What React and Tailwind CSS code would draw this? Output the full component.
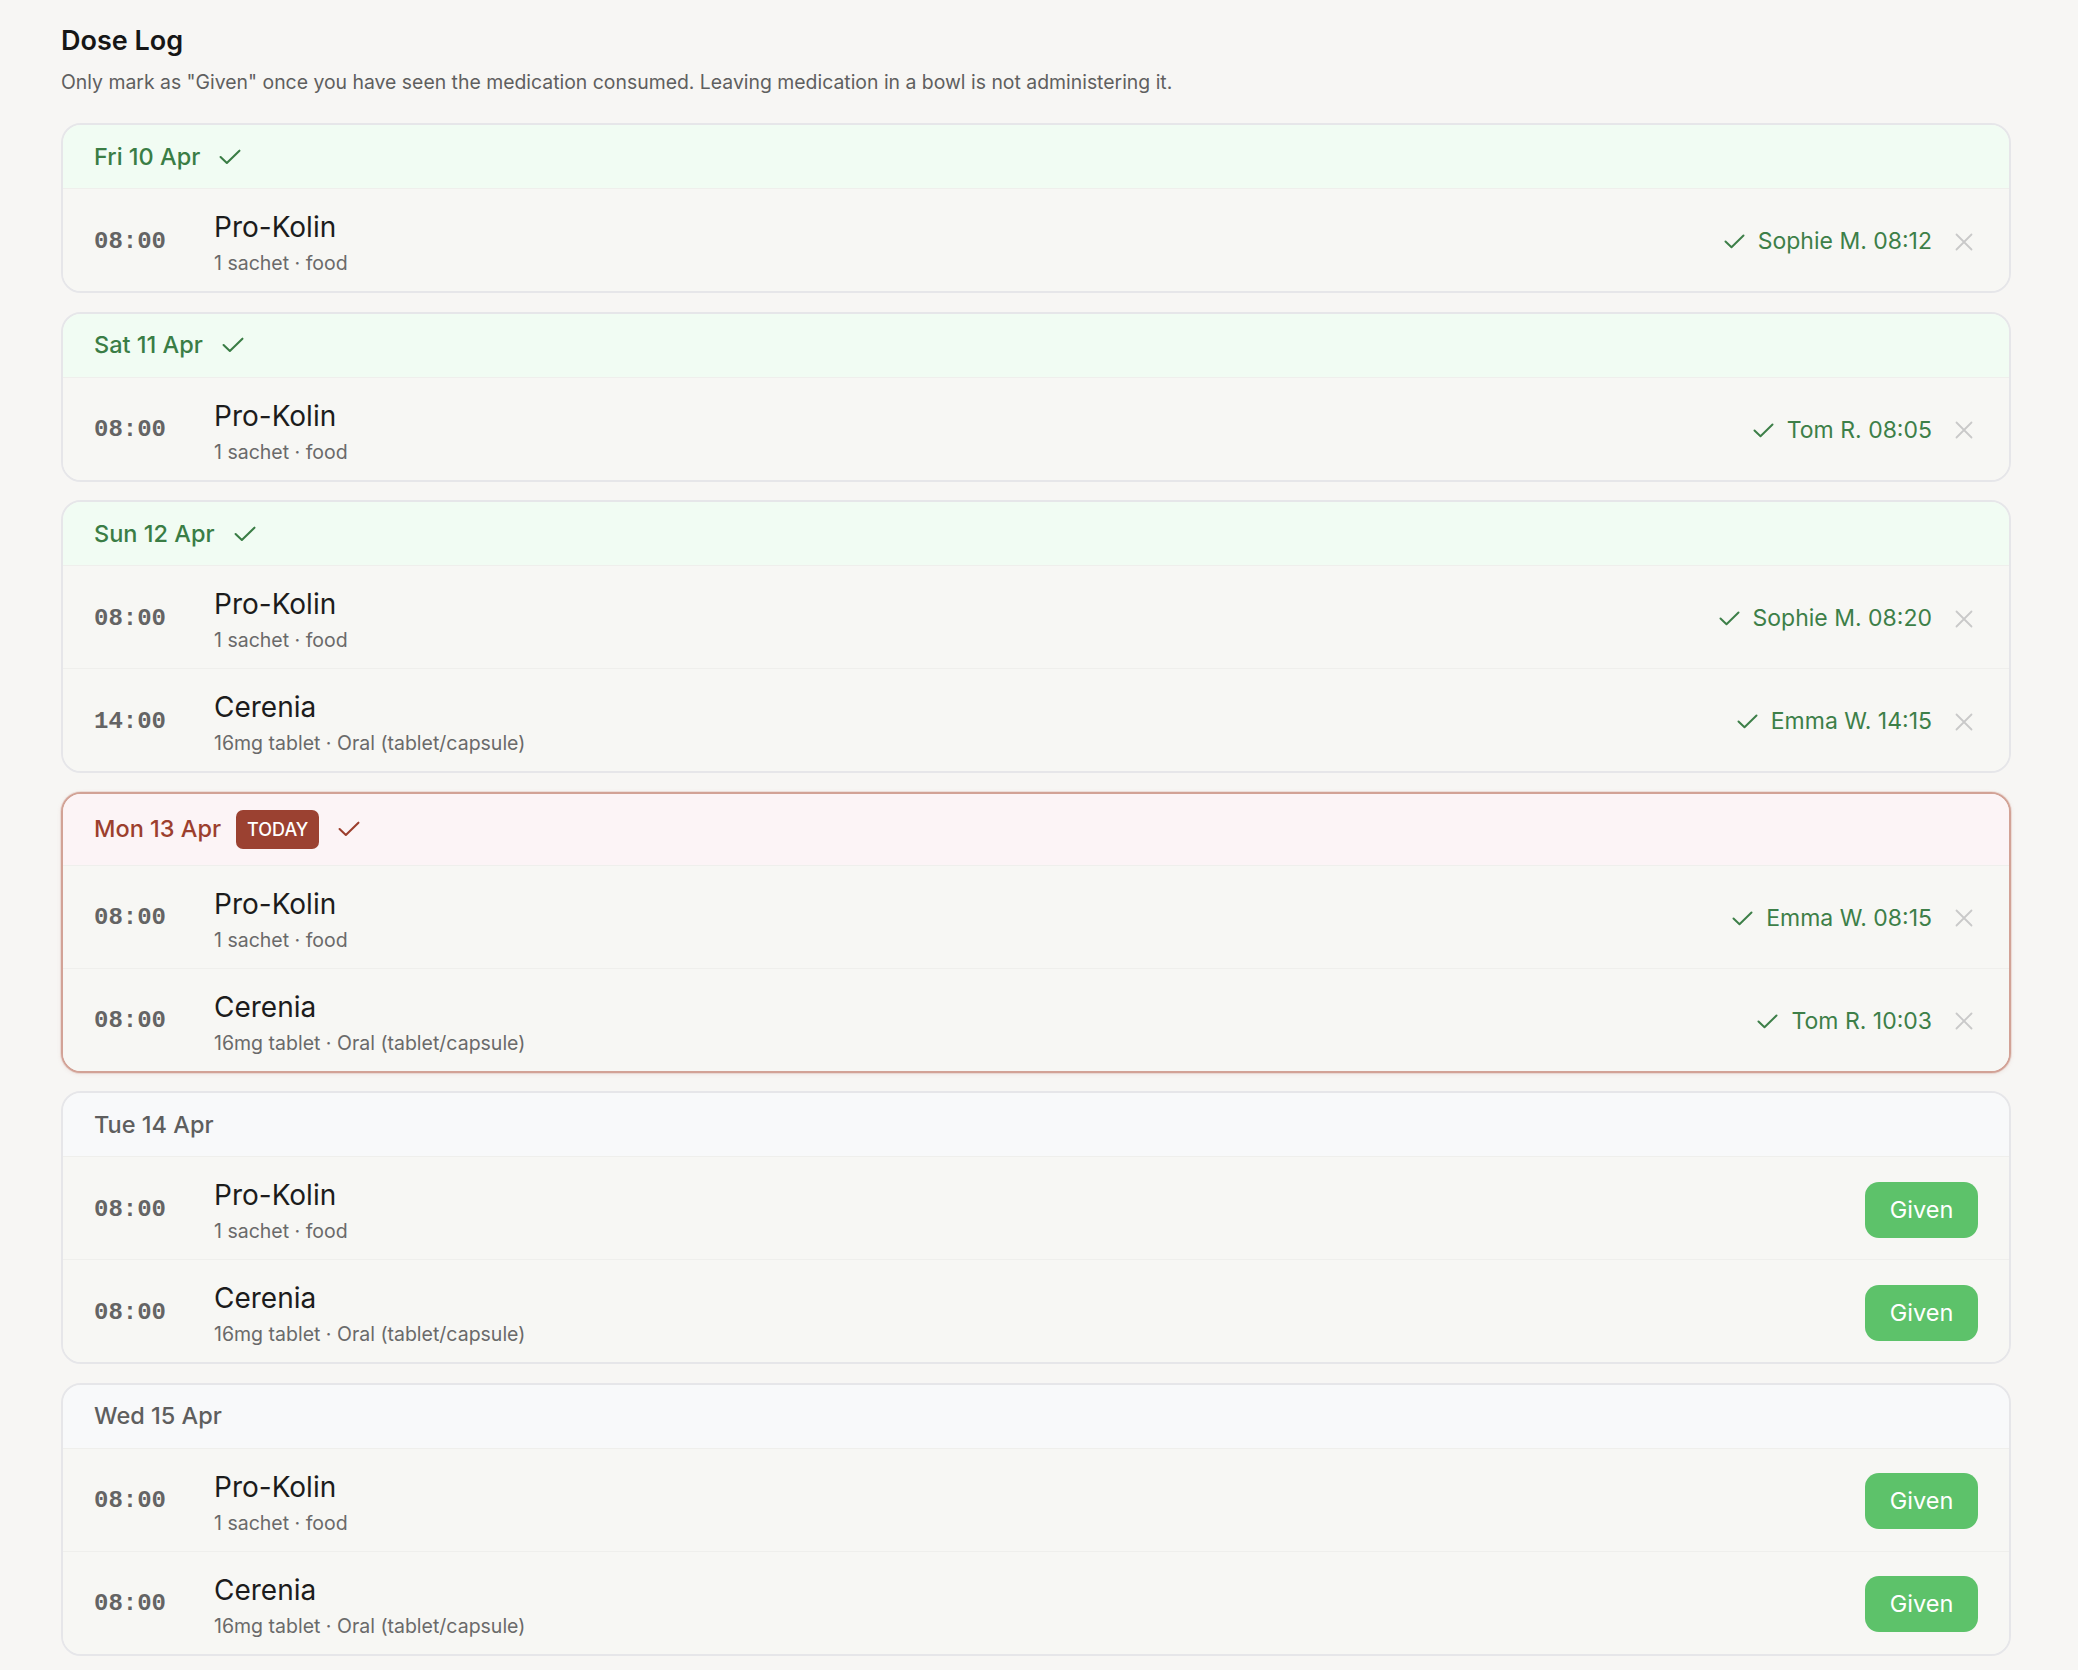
import React from 'react';

const days = [
  {
    label: 'Fri 10 Apr',
    state: 'done',
    doses: [{ time: '08:00', name: 'Pro-Kolin', detail: '1 sachet · food', by: 'Sophie M. 08:12' }],
  },
  {
    label: 'Sat 11 Apr',
    state: 'done',
    doses: [{ time: '08:00', name: 'Pro-Kolin', detail: '1 sachet · food', by: 'Tom R. 08:05' }],
  },
  {
    label: 'Sun 12 Apr',
    state: 'done',
    doses: [
      { time: '08:00', name: 'Pro-Kolin', detail: '1 sachet · food', by: 'Sophie M. 08:20' },
      { time: '14:00', name: 'Cerenia', detail: '16mg tablet · Oral (tablet/capsule)', by: 'Emma W. 14:15' },
    ],
  },
  {
    label: 'Mon 13 Apr',
    state: 'today',
    doses: [
      { time: '08:00', name: 'Pro-Kolin', detail: '1 sachet · food', by: 'Emma W. 08:15' },
      { time: '08:00', name: 'Cerenia', detail: '16mg tablet · Oral (tablet/capsule)', by: 'Tom R. 10:03' },
    ],
  },
  {
    label: 'Tue 14 Apr',
    state: 'upcoming',
    doses: [
      { time: '08:00', name: 'Pro-Kolin', detail: '1 sachet · food' },
      { time: '08:00', name: 'Cerenia', detail: '16mg tablet · Oral (tablet/capsule)' },
    ],
  },
  {
    label: 'Wed 15 Apr',
    state: 'upcoming',
    doses: [
      { time: '08:00', name: 'Pro-Kolin', detail: '1 sachet · food' },
      { time: '08:00', name: 'Cerenia', detail: '16mg tablet · Oral (tablet/capsule)' },
    ],
  },
];

function CheckMark({ className, w = 21, h = 15 }) {
  return (
    <svg width={w} height={h} viewBox="0 0 21 15" fill="none" className={className}>
      <polyline points="1.5,7.5 7.5,13.2 19.5,1.5" stroke="currentColor" strokeWidth="2" strokeLinecap="round" strokeLinejoin="round" />
    </svg>
  );
}

function Cross() {
  return (
    <svg width="18" height="18" viewBox="0 0 18 18" fill="none" className="text-[#c9c9c9]">
      <path d="M1.5 1.5 16.5 16.5M16.5 1.5 1.5 16.5" stroke="currentColor" strokeWidth="1.8" strokeLinecap="round" />
    </svg>
  );
}

function DoseRow({ dose }) {
  return (
    <div className="h-[102px] flex items-center pl-[31px] pr-[31px] bg-[#f7f7f4]">
      <div className="w-[120px] mt-[3px] font-['Liberation_Mono',monospace] font-bold text-[24px] text-[#646464]">
        {dose.time}
      </div>
      <div className="flex flex-col mt-[6px]">
        <div className="text-[28px] leading-[34px] text-[#1c1c1c]">{dose.name}</div>
        <div className="text-[19.5px] leading-[26px] mt-[6px] text-[#6a6a6a]">{dose.detail}</div>
      </div>
      <div className="ml-auto mt-[3px] flex items-center">
        {dose.by ? (
          <>
            <CheckMark className="text-[#3d7f48]" />
            <span className="ml-[13px] text-[23px] text-[#3d7f48]">{dose.by}</span>
            <span className="ml-[23px] mr-[5px] flex items-center">
              <Cross />
            </span>
          </>
        ) : (
          <button className="h-[56px] w-[113px] rounded-[14px] bg-[#5dc26a] text-white text-[23.5px]">
            Given
          </button>
        )}
      </div>
    </div>
  );
}

function DayCard({ day }) {
  const today = day.state === 'today';
  const done = day.state !== 'upcoming';
  const cardBorder = today
    ? 'border-[#d2a296] shadow-[0_0_0_1px_rgba(210,162,150,0.25),0_1px_4px_rgba(180,120,110,0.15)]'
    : 'border-[#e6e6e9]';
  const headBg = today ? 'bg-[#fcf4f6]' : done ? 'bg-[#f1fcf3]' : 'bg-[#f8f9fa]';
  const headText = today ? 'text-[#9c3f2e]' : done ? 'text-[#3a7d45]' : 'text-[#5e5e5e]';

  return (
    <div className={`border-2 ${cardBorder} rounded-[20px] overflow-hidden bg-[#f7f7f4]`}>
      <div className={`${today ? 'h-[72px]' : 'h-[64px]'} flex items-center pl-[31px] ${headBg} border-b border-[#efefec]`}>
        <span className={`text-[23.5px] font-medium ${headText}`}>{day.label}</span>
        {today && (
          <span className="ml-[15px] h-[39px] px-[11px] flex items-center rounded-[7px] bg-[#9b4131] text-white text-[18px] font-medium">
            TODAY
          </span>
        )}
        {done && <CheckMark className={`ml-[19px] ${headText}`} w={22} h={16} />}
      </div>
      {day.doses.map((dose, i) => (
        <div key={i} className={i > 0 ? 'border-t border-[#efefec]' : ''}>
          <DoseRow dose={dose} />
        </div>
      ))}
    </div>
  );
}

export default function App() {
  return (
    <div className="min-h-screen bg-[#f7f6f4] pt-[23px] pb-[14px] pl-[61px] pr-[67px] font-['Inter',sans-serif]">
      <h1 className="text-[27px] leading-[36px] font-semibold text-[#161616]">Dose Log</h1>
      <p className="mt-[10px] text-[19.4px] leading-[27px] text-[#5f5f5f]">
        Only mark as "Given" once you have seen the medication consumed. Leaving medication in a bowl is not administering it.
      </p>
      <div className="mt-[27px] flex flex-col gap-[18.5px]">
        {days.map((day) => (
          <DayCard key={day.label} day={day} />
        ))}
      </div>
    </div>
  );
}
